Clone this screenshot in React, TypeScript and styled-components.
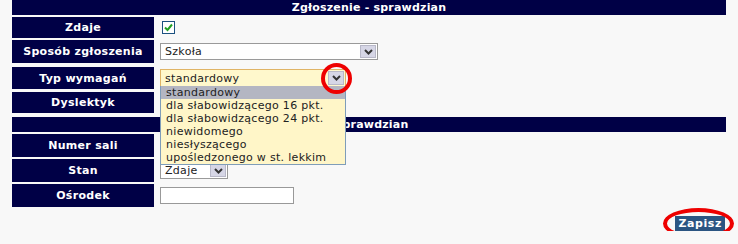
import React from 'react';
import styled, { createGlobalStyle } from 'styled-components';

const GlobalStyle = createGlobalStyle`
  html, body {
    margin: 0;
    padding: 0;
    background: #f8f8f8;
  }
  body {
    font-family: 'DejaVu Sans', Verdana, sans-serif;
    font-size: 11px;
  }
`;

const Page = styled.div`
  width: 714px;
  margin-left: 12px;
  display: flex;
  flex-direction: column;
`;

const HeaderBar = styled.div<{ $gap?: number; $shift?: number }>`
  height: 15px;
  margin-top: ${(p) => p.$gap ?? 0}px;
  padding-right: ${(p) => p.$shift ?? 0}px;
  background: #000046;
  color: #fff;
  font-weight: bold;
  font-size: 11px;
  line-height: 15px;
  letter-spacing: 0.2px;
  text-align: center;
  white-space: nowrap;
  overflow: hidden;
`;

const Row = styled.div<{ $h: number; $gap: number }>`
  display: flex;
  height: ${(p) => p.$h}px;
  margin-top: ${(p) => p.$gap}px;
`;

const Label = styled.div`
  width: 142px;
  flex: none;
  background: #000046;
  color: #fff;
  font-weight: bold;
  font-size: 11px;
  letter-spacing: 0.3px;
  display: flex;
  align-items: center;
  justify-content: center;
`;

const Field = styled.div`
  position: relative;
  flex: 1;
  display: flex;
  align-items: center;
  padding-left: 6px;
`;

const CheckBox = styled.span`
  width: 11px;
  height: 11px;
  margin-left: 2px;
  border: 1px solid #1c5180;
  background: #fff;
  display: flex;
  align-items: center;
  justify-content: center;
`;

const SelectBox = styled.div<{ $w: number; $h: number; $active?: boolean }>`
  position: relative;
  box-sizing: border-box;
  width: ${(p) => p.$w}px;
  height: ${(p) => p.$h}px;
  border: 1px solid ${(p) => (p.$active ? '#e0b466' : '#9a9a9a')};
  background: ${(p) => (p.$active ? '#fff8cc' : '#fff')};
  display: flex;
  align-items: center;
  color: #222;
  font-size: 11px;
  letter-spacing: 0.3px;
`;

const SelectText = styled.span`
  flex: 1;
  padding-left: 4px;
  white-space: nowrap;
  overflow: hidden;
`;

const ArrowButton = styled.span`
  width: 16px;
  align-self: stretch;
  margin: 1px;
  box-sizing: border-box;
  border: 1px solid #b8b8c8;
  background: #d6d6e6;
  display: flex;
  align-items: center;
  justify-content: center;
`;

const TextInput = styled.div<{ $w: number }>`
  box-sizing: border-box;
  width: ${(p) => p.$w}px;
  height: 17px;
  border: 1px solid #999;
  background: #fff;
`;

const DropList = styled.ul`
  position: absolute;
  top: 100%;
  left: -1px;
  z-index: 5;
  box-sizing: border-box;
  width: 186px;
  margin: 0;
  padding: 0;
  list-style: none;
  border: 1px solid #7f9db9;
  border-top: none;
  background: #fff6c8;
`;

const DropItem = styled.li<{ $selected?: boolean }>`
  height: 13px;
  line-height: 13px;
  padding-left: 5px;
  white-space: nowrap;
  color: #222;
  letter-spacing: 0.3px;
  background: ${(p) => (p.$selected ? '#b4b6c2' : 'transparent')};
`;

const RingMark = styled.span<{ $w: number; $h: number; $x: number; $y: number }>`
  position: absolute;
  left: ${(p) => p.$x}px;
  top: ${(p) => p.$y}px;
  width: ${(p) => p.$w}px;
  height: ${(p) => p.$h}px;
  box-sizing: border-box;
  border: 4px solid #ee0000;
  border-radius: 50%;
  pointer-events: none;
  z-index: 6;
`;

const Footer = styled.div`
  display: flex;
  justify-content: flex-end;
  margin-top: 9px;
  padding-right: 1px;
`;

const SaveWrap = styled.div`
  position: relative;
`;

const SaveButton = styled.button`
  height: 15px;
  padding: 0 3px;
  border: none;
  background: #2b5582;
  color: #fff;
  font-family: 'DejaVu Sans', Verdana, sans-serif;
  font-weight: bold;
  font-size: 11px;
  letter-spacing: 0.6px;
  line-height: 15px;
`;

const Chevron = () => (
  <svg width="9" height="6" viewBox="0 0 9 6">
    <path d="M1 1 L4.5 4.5 L8 1" fill="none" stroke="#333" strokeWidth="2" />
  </svg>
);

const Tick = () => (
  <svg width="9" height="9" viewBox="0 0 9 9">
    <path d="M1 4.5 L3.5 7 L8 1.5" fill="none" stroke="#22a022" strokeWidth="2" />
  </svg>
);

const options = [
  'standardowy',
  'dla słabowidzącego 16 pkt.',
  'dla słabowidzącego 24 pkt.',
  'niewidomego',
  'niesłyszącego',
  'upośledzonego w st. lekkim',
];

export default function App() {
  return (
    <>
      <GlobalStyle />
      <Page>
        <HeaderBar>Zgłoszenie - sprawdzian</HeaderBar>

        <Row $h={21} $gap={2}>
          <Label>Zdaje</Label>
          <Field>
            <CheckBox>
              <Tick />
            </CheckBox>
          </Field>
        </Row>

        <Row $h={23} $gap={2}>
          <Label>Sposób zgłoszenia</Label>
          <Field>
            <SelectBox $w={218} $h={17}>
              <SelectText>Szkoła</SelectText>
              <ArrowButton>
                <Chevron />
              </ArrowButton>
            </SelectBox>
          </Field>
        </Row>

        <Row $h={22} $gap={4}>
          <Label>Typ wymagań</Label>
          <Field>
            <SelectBox $w={186} $h={18} $active>
              <SelectText>standardowy</SelectText>
              <ArrowButton>
                <Chevron />
              </ArrowButton>
              <RingMark $w={31} $h={31} $x={160} $y={-7} />
              <DropList>
                {options.map((o, i) => (
                  <DropItem key={o} $selected={i === 0}>
                    {o}
                  </DropItem>
                ))}
              </DropList>
            </SelectBox>
          </Field>
        </Row>

        <Row $h={21} $gap={3}>
          <Label>Dyslektyk</Label>
          <Field>
            <CheckBox />
          </Field>
        </Row>

        <HeaderBar $gap={4} $shift={34}>
          Sala - sprawdzian
        </HeaderBar>

        <Row $h={23} $gap={2}>
          <Label>Numer sali</Label>
          <Field>
            <TextInput $w={134} />
          </Field>
        </Row>

        <Row $h={23} $gap={2}>
          <Label>Stan</Label>
          <Field>
            <SelectBox $w={68} $h={17}>
              <SelectText>Zdaje</SelectText>
              <ArrowButton>
                <Chevron />
              </ArrowButton>
            </SelectBox>
          </Field>
        </Row>

        <Row $h={23} $gap={2}>
          <Label>Ośrodek</Label>
          <Field>
            <TextInput $w={134} />
          </Field>
        </Row>

        <Footer>
          <SaveWrap>
            <SaveButton>Zapisz</SaveButton>
            <RingMark $w={71} $h={31} $x={-12} $y={-8} />
          </SaveWrap>
        </Footer>
      </Page>
    </>
  );
}
